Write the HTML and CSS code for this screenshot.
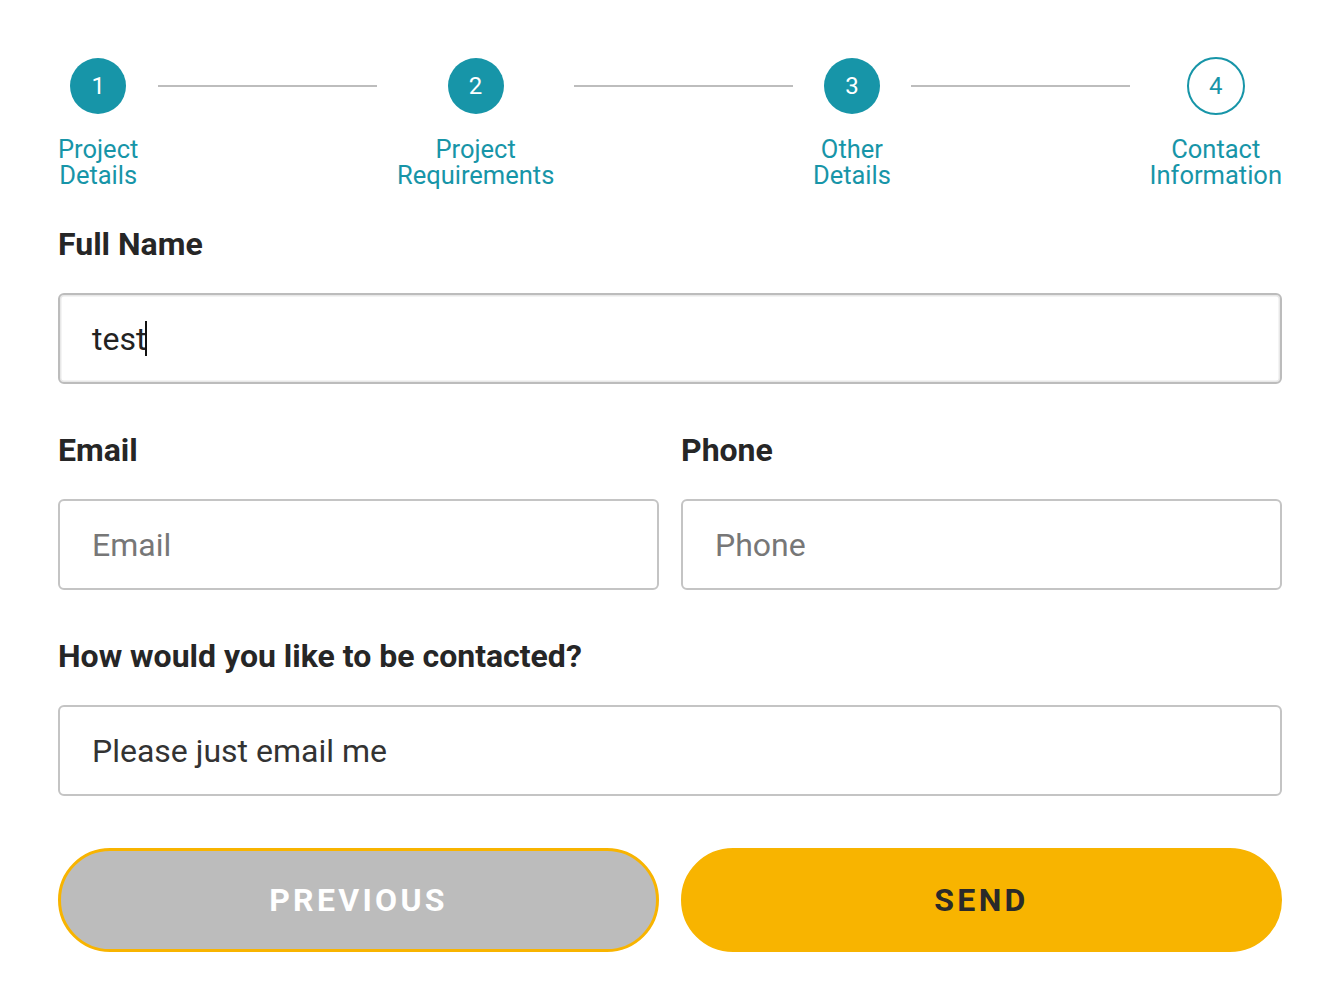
FILE: index.html
```html
<!DOCTYPE html>
<html lang="en">
<head>
<meta charset="utf-8">
<title>Contact Information</title>
<link rel="stylesheet" href="styles.css">
</head>
<body>
<main class="wizard">
  <ol class="stepper">
    <li class="step done">
      <span class="circle">1</span>
      <span class="step-label"><span class="line">Project</span><span class="line">Details</span></span>
    </li>
    <li class="connector" aria-hidden="true"></li>
    <li class="step done">
      <span class="circle">2</span>
      <span class="step-label"><span class="line">Project</span><span class="line">Requirements</span></span>
    </li>
    <li class="connector" aria-hidden="true"></li>
    <li class="step done">
      <span class="circle">3</span>
      <span class="step-label"><span class="line">Other</span><span class="line">Details</span></span>
    </li>
    <li class="connector" aria-hidden="true"></li>
    <li class="step current">
      <span class="circle">4</span>
      <span class="step-label"><span class="line">Contact</span><span class="line">Information</span></span>
    </li>
  </ol>

  <form class="form">
    <div class="group">
      <label class="label">Full Name</label>
      <div class="field focused" role="textbox">test<span class="caret"></span></div>
    </div>

    <div class="row">
      <div class="group">
        <label class="label" for="email">Email</label>
        <input class="field" id="email" type="text" placeholder="Email">
      </div>
      <div class="group">
        <label class="label" for="phone">Phone</label>
        <input class="field" id="phone" type="text" placeholder="Phone">
      </div>
    </div>

    <div class="group">
      <label class="label" for="contact">How would you like to be contacted?</label>
      <input class="field" id="contact" type="text" value="Please just email me">
    </div>

    <div class="buttons">
      <button type="button" class="btn btn-prev">PREVIOUS</button>
      <button type="button" class="btn btn-send">SEND</button>
    </div>
  </form>
</main>
</body>
</html>
```

FILE: styles.css
```css
* {
  box-sizing: border-box;
}

html, body {
  margin: 0;
  padding: 0;
  background: #ffffff;
}

body {
  font-family: Roboto, "Liberation Sans", Arial, sans-serif;
  color: #262626;
}

.wizard {
  width: 1224px;
  margin: 0 0 0 58px;
  padding-top: 58px;
}

/* Stepper */
.stepper {
  list-style: none;
  margin: 0;
  padding: 0;
  display: flex;
  align-items: flex-start;
}

.step {
  display: flex;
  flex-direction: column;
  align-items: center;
}

.circle {
  width: 56px;
  height: 56px;
  border-radius: 50%;
  background: #1795a8;
  color: #ffffff;
  display: flex;
  align-items: center;
  justify-content: center;
  font-size: 24px;
  line-height: 1;
}

.step.current .circle {
  width: 58px;
  height: 58px;
  margin: -1px 0;
  background: #ffffff;
  color: #1795a8;
  border: 2px solid #1795a8;
}

.step-label {
  margin-top: 22px;
  display: flex;
  flex-direction: column;
  align-items: center;
  font-size: 25.5px;
  line-height: 26px;
  color: #1795a8;
  text-align: center;
  white-space: nowrap;
}

.step-label .line {
  display: block;
  height: 26px;
}

.connector {
  flex: 1;
  height: 2px;
  margin: 27px 20px 0;
  background: #bdbdbd;
}

/* Form */
.form {
  margin-top: 37px;
  display: flex;
  flex-direction: column;
  gap: 47px;
}

.group {
  display: flex;
  flex-direction: column;
}

.row {
  display: grid;
  grid-template-columns: 1fr 1fr;
  gap: 22px;
}

.label {
  font-size: 32px;
  line-height: 38px;
  font-weight: 700;
  color: #262626;
  margin-bottom: 30px;
}

.field {
  display: flex;
  align-items: center;
  width: 100%;
  height: 91px;
  margin: 0;
  padding: 0 30px 0 32px;
  border: 2px solid #c4c4c4;
  border-radius: 6px;
  background: #ffffff;
  font-family: Roboto, "Liberation Sans", Arial, sans-serif;
  font-size: 32px;
  color: #333333;
  outline: none;
}

.field::placeholder {
  color: #777777;
  opacity: 1;
}

.field.focused {
  color: #222222;
  border-color: #bcbcbc;
  box-shadow: inset 0 0 0 1.5px #e8e8e8;
}

.caret {
  display: inline-block;
  width: 2px;
  height: 35px;
  margin-left: -1px;
  background: #111111;
}

/* Buttons */
.buttons {
  display: grid;
  grid-template-columns: 1fr 1fr;
  gap: 22px;
  margin-top: 5px;
}

.btn {
  height: 104px;
  border-radius: 52px;
  border: 3px solid #f8b400;
  font-family: Roboto, "Liberation Sans", Arial, sans-serif;
  font-size: 32px;
  font-weight: 700;
  letter-spacing: 3.3px;
  cursor: pointer;
  padding: 0;
}

.btn-prev {
  background: #bcbcbc;
  color: #ffffff;
}

.btn-send {
  background: #f8b400;
  color: #2a2a2a;
}
```
